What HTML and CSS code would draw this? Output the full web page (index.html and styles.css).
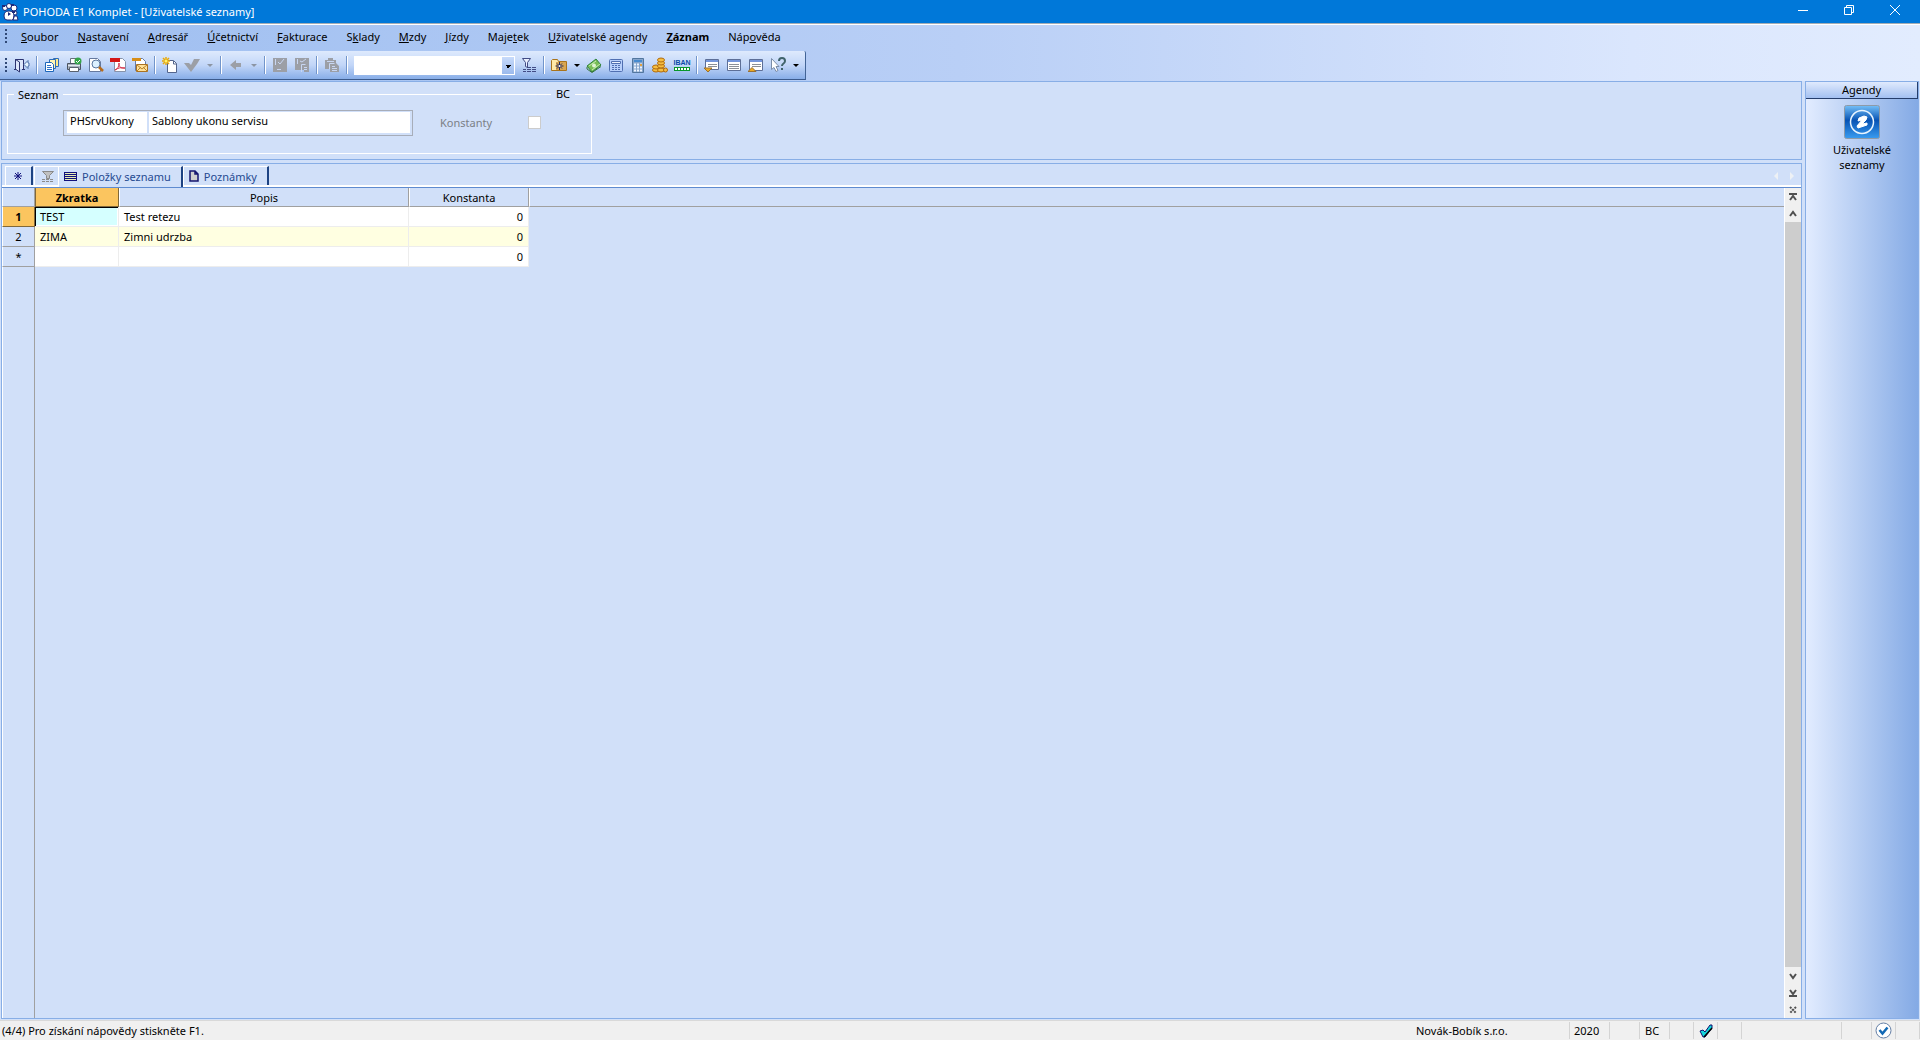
FILE: index.html
```html
<!DOCTYPE html>
<html lang="cs">
<head>
  <meta charset="UTF-8" />
  <meta name="viewport" content="width=device-width, initial-scale=1.0" />
  <title>POHODA E1 Komplet - [Uživatelské seznamy]</title>
  <link rel="stylesheet" href="styles.css">
</head>
<body>
  <header class="titlebar">
    <svg class="logo" width="18" height="18" viewBox="0 0 18 18">
      <g fill="#fff" stroke="#1c2a7c"><circle cx="4" cy="5" r="2.5"/><circle cx="8" cy="3" r="2.5"/><circle cx="13" cy="5" r="3"/><circle cx="14" cy="10" r="2"/><path d="M3 13q0-5 5-5t5 5-4 4H6q-3 0-3-4zM13 13h3l1 4h-5z"/></g>
      <path d="M1 2h3v2H1zM7 9l3 2-3 2zM10 1h3v2h-3zM11 8h3v2h-3z" fill="#1c2a7c"/>
    </svg>
    <h1>POHODA E1 Komplet - [Uživatelské seznamy]</h1>
    <div class="window-buttons">
      <button aria-label="Minimalizovat"><svg width="12" height="12"><path d="M1 6.500h10"/></svg></button>
      <button aria-label="Obnovit"><svg width="12" height="12"><path d="M1.500 3.500h7v7h-7zM3.500 3V1.500h7v7H9"/></svg></button>
      <button aria-label="Zavřít"><svg width="12" height="12"><path d="M1 1l10 10M11 1L1 11"/></svg></button>
    </div>
  </header>

  <div class="bars">
    <nav class="menu">
      <span class="grip"></span>
      <button><u>S</u>oubor</button>
      <button><u>N</u>astavení</button>
      <button><u>A</u>dresář</button>
      <button><u>Ú</u>četnictví</button>
      <button><u>F</u>akturace</button>
      <button>S<u>k</u>lady</button>
      <button><u>M</u>zdy</button>
      <button><u>J</u>ízdy</button>
      <button>Maje<u>t</u>ek</button>
      <button><u>U</u>živatelské agendy</button>
      <button class="strong"><u>Z</u>áznam</button>
      <button>Náp<u>o</u>věda</button>
    </nav>

    <div class="toolbar">
      <span class="grip"></span>
      <button class="tool" aria-label="Konec"><svg viewBox="0 0 16 16"><path d="M1.500 12V2.500h8V12M1.500 2.500l4 2.500v10l-4-3zM0 12.500h2M8 12.500h3" fill="#dce6fa" stroke="#2b3370"/><path d="M10 7.500l4-4v2.500h1v3h-1v2.500z" fill="#e6f4ff" stroke="#4c70a8"/></svg></button>
      <span class="sep"></span>
      <button class="tool" aria-label="Agendy"><svg viewBox="0 0 16 16"><path d="M9.500 1.500h5v8h-5z" fill="#ffe98a" stroke="#2d6cb8"/><path d="M5.500 2.500h6v9h-6z" fill="#fff6b5" stroke="#2d6cb8"/><path d="M1.500 5.500h6l2 2v7h-8z" fill="#fff" stroke="#1d66ba"/><path d="M3 8.500h4M3 10.500h5M3 12.500h5" stroke="#2d72c8"/></svg></button>
      <button class="tool" aria-label="Tisk"><svg viewBox="0 0 16 16"><path d="M4.500 6V1.500h6l1 1V6" fill="#fff" stroke="#69707d"/><path d="M1.500 6.500h13v6h-13z" fill="#aab3c0" stroke="#4b5360"/><path d="M3.500 10.500h9v4h-9z" fill="#fff" stroke="#59616e"/><path d="M2 8.500h12" stroke="#e4e9ef"/><circle cx="12" cy="4" r="3.500" fill="#35a549"/><path d="M10 4l1.500 1.500L14 3" fill="none" stroke="#fff"/></svg></button>
      <button class="tool" aria-label="Náhled"><svg viewBox="0 0 16 16"><path d="M1.500 1.500h8l3 3v10h-11z" fill="#fff" stroke="#66799e"/><circle cx="8" cy="7" r="4" fill="#dcf1ff" stroke="#59779f"/><path d="M11 10l4 4" stroke="#b66b1c" stroke-width="2.500"/></svg></button>
      <button class="tool" aria-label="PDF"><svg viewBox="0 0 16 16"><path d="M4.500 1.500h8l3 3v10h-11z" fill="#fff" stroke="#8793aa"/><path d="M0 1h10v4H0z" fill="#d41717"/><path d="M5 13c3-1 4-4 4-7 0 4 2 6 6 5-4-1-7 0-10 2z" fill="none" stroke="#d5324a"/></svg></button>
      <button class="tool" aria-label="E-mail"><svg viewBox="0 0 16 16"><path d="M3.500 1.500h7l3 3v9h-10z" fill="#fff" stroke="#657ba6"/><path d="M0 1h9v3H0z" fill="#d78e18"/><path d="M4.500 7.500h11v7h-11z" fill="#ffe19a" stroke="#aa7221"/><path d="M5 8l5 4 5-4M5 14l4-4M15 14l-4-4" fill="none" stroke="#b9852b"/></svg></button>
      <span class="sep"></span>
      <button class="tool" aria-label="Nový"><svg viewBox="0 0 16 16"><path d="M5.500 3.500h6l3 3v9h-9z" fill="#fff" stroke="#53658d"/><path d="M11.500 4v3h3" fill="none" stroke="#53658d"/><path d="M4 0v8M0 4h8M1 1l6 6M7 1L1 7" stroke="#e8a90b" stroke-width="1.500"/><circle cx="4" cy="4" r="1.500" fill="#fff36b"/></svg></button>
      <button class="tool" aria-label="Uložit" disabled><svg viewBox="0 0 16 16"><path d="M0 6h5l2 2 3-6h6l-3 5-6 8z" fill="#9c9fa6"/></svg></button>
      <button class="drop grey" aria-label="Možnosti"></button>
      <span class="sep"></span>
      <button class="tool" aria-label="Zpět" disabled><svg viewBox="0 0 16 16"><path d="M2 8l6-5v3h5v4H8v3z" fill="#9c9fa6"/></svg></button>
      <button class="drop grey" aria-label="Historie"></button>
      <span class="sep"></span>
      <button class="tool" aria-label="Uložit záznam" disabled><svg viewBox="0 0 16 16"><path d="M1 1h14v14H1z" fill="#9c9fa6"/><path d="M3.500 2v6M6 5l2 2 4-5M5 12.500h4" stroke="#c8d6f2" fill="none"/></svg></button>
      <button class="tool" aria-label="Uložit kopii" disabled><svg viewBox="0 0 16 16"><path d="M1 1h14v14h-5v-2H1z" fill="#9c9fa6"/><path d="M3.500 2v5M6 4l2 1 4-3M7.500 15V7.500h4M10 10.500h3M10 12.500h3" stroke="#c8d6f2" fill="none"/></svg></button>
      <span class="sep"></span>
      <button class="tool" aria-label="Kopírovat" disabled><svg viewBox="0 0 16 16"><path d="M1 3h3V1h5v2h3v3l3 3v6H6v-3H1z" fill="#9c9fa6"/><path d="M3 4.500h7M5.500 12V6.500h5M8 9.500h3M8 11.500h5M8 13.500h5" stroke="#c8d6f2" fill="none"/></svg></button>
      <span class="sep"></span>
      <select class="search" aria-label="Hledat"><option></option></select>
      <button class="tool" aria-label="Výběr"><svg viewBox="0 0 16 16"><path d="M1.500 1.500h8l-3 4v5l-2-1v-4z" fill="#e9efff" stroke="#424c85"/><path d="M2 12.500h3M2 14.500h3M6 10.500h4M6 12.500h4M6 14.500h4M11 10.500h4M11 12.500h4M11 14.500h4" stroke="#424c85"/></svg></button>
      <span class="sep"></span>
      <button class="tool" aria-label="Oblíbené"><svg viewBox="0 0 16 16"><path d="M.5 13.500v-10l1-1h5l1 2h8v9z" fill="#ffe9a8" stroke="#a9741c"/><path d="M5 5h10v8H5z" fill="#d9a650"/><path d="M8.500 5v8M4.500 9h8M6 6.500l5 5M11 6.500l-5 5" stroke="#1d2862"/><circle cx="8.500" cy="9" r="1" fill="#fff"/></svg></button>
      <button class="drop" aria-label="Další"></button>
      <button class="tool" aria-label="Pokladna"><svg viewBox="0 0 16 16"><path d="M1 9l9-7 5 6-9 7z" fill="#79bd56" stroke="#30843c"/><path d="M3 9l7-5M6 13l8-6" stroke="#c5ecb0"/><circle cx="8" cy="8.500" r="2" fill="#dff3d3"/><path d="M1 10v2l5 3.500 9-6" fill="none" stroke="#39763a"/></svg></button>
      <button class="tool" aria-label="Kalkulačka"><svg viewBox="0 0 16 16"><rect x="1.500" y="2.500" width="13" height="12" rx="1" fill="#b8d0fb" stroke="#506fb1"/><path d="M3.500 4.500h9v2h-9z" fill="#edf4ff" stroke="#506fb1"/><path d="M4 8.500h9M4 10.500h9M4 12.500h9" stroke="#506fb1" stroke-dasharray="2 1"/></svg></button>
      <button class="tool" aria-label="Výpočet"><svg viewBox="0 0 16 16"><path d="M2.500 1.500h11v14h-11z" fill="#86a5cc" stroke="#53779e"/><path d="M4 3h8v2H4z" fill="#468bd0"/><path d="M4 7.500h8M4 10.500h8M4 13.500h8" stroke="#edf5ff" stroke-width="2" stroke-dasharray="2 1"/><path d="M10 7h2v2h-2z" fill="#e4a13c"/></svg></button>
      <button class="tool" aria-label="Kurzy"><svg viewBox="0 0 16 16"><g fill="#f5be42" stroke="#b06a0c"><ellipse cx="4" cy="13" rx="3.500" ry="2"/><ellipse cx="4" cy="10" rx="3.500" ry="2"/><ellipse cx="9" cy="13" rx="3.500" ry="2"/><ellipse cx="9" cy="9" rx="3.500" ry="2"/><ellipse cx="9" cy="6" rx="3.500" ry="2"/><ellipse cx="9" cy="3" rx="3.500" ry="2"/><circle cx="13.500" cy="13" r="2"/></g></svg></button>
      <button class="tool iban" aria-label="Kontrola IBAN"><span>IBAN</span><svg viewBox="0 0 16 4"><path d="M0 0h16v4H0z" fill="#08972b"/><path d="M1 2h14" stroke="#fff" stroke-width="2" stroke-dasharray="2 1"/></svg></button>
      <span class="sep"></span>
      <button class="tool" aria-label="Dolní panel"><svg viewBox="0 0 16 16"><path d="M1.500 2.500h13v10h-13z" fill="#fff" stroke="#5d6f97"/><path d="M2 3h12v2H2z" fill="#7395dc"/><path d="M4 7.500h9M4 9.500h9" stroke="#8b9098"/><path d="M0 11h8l-4 4z" fill="#eba924" stroke="#9b7130"/></svg></button>
      <button class="tool" aria-label="Panel"><svg viewBox="0 0 16 16"><path d="M1.500 2.500h13v11h-13z" fill="#fff" stroke="#5d6f97"/><path d="M2 3h12v2H2z" fill="#7395dc"/><path d="M3 7.500h10M3 9.500h10M3 11.500h10" stroke="#8b9098"/></svg></button>
      <button class="tool" aria-label="Horní panel"><svg viewBox="0 0 16 16"><path d="M1.500 2.500h13v11h-13z" fill="#fff" stroke="#5d6f97"/><path d="M2 3h12v2H2z" fill="#7395dc"/><path d="M4 7.500h9M4 9.500h9" stroke="#8b9098"/><path d="M0 14.500h8l-4-4z" fill="#eba924" stroke="#9b7130"/></svg></button>
      <button class="tool" aria-label="Nápověda"><svg viewBox="0 0 16 16"><path d="M1.500 1.500v11l2.500-2 2 4 2-1-2-4h3z" fill="#fff" stroke="#7b8da8"/><path d="M9 4c0-4 6-4 6 0 0 3-3 2-3 5M12 11v2" fill="none" stroke="#40636b" stroke-width="2"/></svg></button>
      <button class="drop" aria-label="Další nápověda"></button>
    </div>
  </div>

  <div class="workspace">
    <main class="content">
      <section class="form-panel">
        <fieldset class="group">
          <legend>Seznam</legend>
          <span class="group-right">BC</span>
          <div class="fields">
            <div class="name-box">
              <input class="code" type="text" value="PHSrvUkony" aria-label="Zkratka seznamu">
              <input class="name" type="text" value="Sablony ukonu servisu" aria-label="Název seznamu">
            </div>
            <label for="konstanty">Konstanty</label>
            <input class="check" type="checkbox" id="konstanty" disabled>
          </div>
        </fieldset>
      </section>

      <section class="list-panel">
        <div class="tabs">
          <button class="tab small" aria-label="Nový záznam"><svg width="8" height="8" viewBox="0 0 8 8"><path d="M4 0v8M0 4h8M1 1l6 6M7 1L1 7" stroke="#10107c"/></svg></button>
          <button class="tab filter" aria-label="Filtr"><svg width="12" height="12" viewBox="0 0 12 12"><path d="M.5 1.500h11l-4 4v3h-3v-3z" fill="#c0c0c0" stroke="#898989"/><path d="M0 9.500h12M0 11.500h12" stroke="#8b8b8b" stroke-dasharray="3 1"/></svg></button>
          <button class="tab active"><svg width="13" height="9" viewBox="0 0 13 9"><path d="M0 0h13v9H0z" fill="#11117d"/><path d="M1 1.500h11M1 3.500h11M1 5.500h11M1 7.500h11" stroke="#e6ecb4"/></svg>Položky seznamu</button>
          <button class="tab"><svg width="10" height="12" viewBox="0 0 10 12"><path d="M1 1h5l3 3v7H1zM6 1v3h3" fill="#cfcfcf" stroke="#15156f" stroke-width="1.500"/></svg>Poznámky</button>
          <span class="tab-scroll"><svg width="20" height="8"><path d="M4 0v8L0 4zM16 0v8l4-4z" fill="#eef1f5"/></svg></span>
        </div>

        <div class="grid-area">
          <table class="grid">
            <colgroup><col class="col-num"><col class="col-code"><col class="col-name"><col class="col-const"><col></colgroup>
            <thead>
              <tr><th></th><th class="current">Zkratka</th><th>Popis</th><th>Konstanta</th><th class="rest"></th></tr>
            </thead>
            <tbody>
              <tr><th class="current">1</th><td class="focus">TEST</td><td>Test retezu</td><td class="number">0</td></tr>
              <tr class="odd"><th>2</th><td>ZIMA</td><td>Zimni udrzba</td><td class="number">0</td></tr>
              <tr><th>*</th><td></td><td></td><td class="number">0</td></tr>
              <tr class="blank"><th></th></tr>
            </tbody>
          </table>
          <div class="scrollbar">
            <button aria-label="Na začátek"><svg width="8" height="8"><path d="M0 1h8M1 7l3-4 3 4"/></svg></button>
            <button aria-label="Nahoru"><svg width="8" height="8"><path d="M1 6l3-4 3 4"/></svg></button>
            <div class="thumb"></div>
            <button aria-label="Dolů"><svg width="8" height="8"><path d="M1 2l3 4 3-4"/></svg></button>
            <button aria-label="Na konec"><svg width="8" height="8"><path d="M1 1l3 4 3-4M0 7h8"/></svg></button>
            <button aria-label="Nový řádek"><svg width="8" height="8"><path d="M1 1l6 6M7 1L1 7" stroke-dasharray="2 1"/></svg></button>
          </div>
        </div>
      </section>
    </main>

    <aside class="agendas">
      <h2>Agendy</h2>
      <a class="agenda" href="#">
        <svg width="36" height="34" viewBox="0 0 36 34">
          <defs><linearGradient id="tile" x2="0" y2="1"><stop stop-color="#75c0f8"/><stop offset=".45" stop-color="#0753b4"/><stop offset="1" stop-color="#3a9cf0"/></linearGradient></defs>
          <rect x=".5" y=".5" width="35" height="33" rx="2" fill="url(#tile)" stroke="#8e9aa8"/>
          <circle cx="18" cy="17" r="11.500" fill="none" stroke="#e9f5ff" stroke-width="1.500"/>
          <path d="M15 13l5-2 3 1-1 3-4 4 5-1v2l-9 3-1-2 5-6-4 1z" fill="#fff" stroke="#fff"/>
        </svg>
        Uživatelské seznamy
      </a>
    </aside>
  </div>

  <footer class="status">
    <span class="hint">(4/4) Pro získání nápovědy stiskněte F1.</span>
    <span class="cell company">Novák-Bobík s.r.o.</span>
    <span class="cell year">2020</span>
    <span class="cell w30"></span>
    <span class="cell w30 user">BC</span>
    <span class="cell w24"></span>
    <span class="cell w24"><svg width="14" height="14" viewBox="0 0 14 14"><path d="M1 7l3-1 2 2 5-7h2v3l-7 9H4z" fill="#15d6dc" stroke="#101070"/><path d="M5 13l8-9" stroke="#000" stroke-width="1.500"/></svg></span>
    <span class="cell w24"></span>
    <span class="cell w100"></span>
    <span class="cell w30"></span>
    <span class="cell w24"><svg width="17" height="17" viewBox="0 0 17 17"><circle cx="8.500" cy="8.500" r="7.500" fill="#fff" stroke="#637ea5"/><path d="M4.500 8l3 3.500 5-6" fill="none" stroke="#1269b5" stroke-width="2.500"/></svg></span>
    <span class="cell w24"></span>
  </footer>
</body>
</html>
```
FILE: styles.css
```css
* {
  box-sizing: border-box;
}

body {
  margin: 0;
  height: 100vh;
  display: flex;
  flex-direction: column;
  overflow: hidden;
  font-family: "Noto Sans", "Open Sans", sans-serif;
  font-size: 11px;
  line-height: 15px;
  color: #000;
  background: #d1e0f9;
}

button,
input,
select {
  font: inherit;
  color: inherit;
  margin: 0;
  padding: 0;
  border: 0;
  border-radius: 0;
  background: none;
}

h1,
h2 {
  margin: 0;
  font-size: inherit;
  font-weight: normal;
}

/* title bar */
.titlebar {
  flex: none;
  height: 24px;
  display: flex;
  align-items: center;
  gap: 4px;
  padding: 0 2px 0 1px;
  color: #fff;
  background: #0078d9;
  border-bottom: 1px solid #a3acb5;
}

.window-buttons {
  margin-left: auto;
  align-self: flex-start;
  display: flex;
  height: 20px;
}

.window-buttons button {
  width: 46px;
  display: flex;
  align-items: center;
  justify-content: center;
}

.window-buttons svg {
  fill: none;
  stroke: #fff;
}

/* menu and toolbar */
.bars {
  flex: none;
  padding-bottom: 1px;
  border-top: 1px solid #fff;
  background: linear-gradient(90deg, #9ebef0, #b9cff6 50%, #dae6fd 85%, #e2ecfe);
}

.menu {
  display: flex;
  align-items: center;
  gap: 1px;
  height: 26px;
  padding: 0 5px 3px;
}

.menu button {
  padding: 0 9px;
}

.menu .strong {
  font-weight: bold;
}

.grip {
  width: 6px;
  height: 15px;
  background: repeating-linear-gradient(#2f4876 0 2px, transparent 2px 4px) left / 2px 100% no-repeat;
}

.toolbar {
  display: flex;
  align-items: center;
  width: max-content;
  height: 29px;
  padding: 0 3px 0 5px;
  border-right: 1px solid #426496;
  border-bottom: 1px solid #3b5a8c;
  border-radius: 0 2px 0 0;
  background: linear-gradient(#deeafd, #c2d6f8 50%, #88aee8);
}

.tool {
  width: 22px;
  height: 22px;
  display: flex;
  align-items: center;
  justify-content: center;
}

.tool svg {
  width: 16px;
  height: 16px;
}

.iban {
  flex-direction: column;
  font-family: "Liberation Sans", sans-serif;
  font-size: 7px;
  line-height: 8px;
  font-weight: bold;
  color: #0a4ca8;
}

.iban svg {
  height: 4px;
}

.sep {
  width: 8px;
  height: 18px;
  background: linear-gradient(90deg, #7295cb 50%, #fff 50%) center / 2px 100% no-repeat;
}

.drop {
  width: 13px;
  height: 22px;
  display: flex;
  align-items: center;
  justify-content: center;
}

.drop::before {
  content: "";
  border: 3px solid transparent;
  border-top-color: #000;
  border-bottom: 0;
}

.drop.grey {
  width: 14px;
}

.drop.grey::before {
  border-top-color: #8c95a3;
}

.search {
  width: 161px;
  height: 19px;
  margin: 0 3px;
  appearance: none;
  border: 1px solid #fff;
  background: linear-gradient(45deg, transparent 50%, #000 50%) right 6px top 8px / 3px 3px no-repeat,
    linear-gradient(-45deg, transparent 50%, #000 50%) right 3px top 8px / 3px 3px no-repeat,
    linear-gradient(#c8dbfb, #9bbaec) right / 12px 100% no-repeat, #fff;
}

/* main area */
.workspace {
  flex: 1;
  min-height: 0;
  display: flex;
  gap: 3px;
  padding: 0 1px;
}

.content {
  flex: 1;
  min-width: 0;
  display: flex;
  flex-direction: column;
  gap: 3px;
}

.form-panel {
  padding: 5px;
  border: 1px solid #88aee6;
}

.group {
  width: 585px;
  height: 67px;
  margin: 0;
  padding: 0;
  border: 1px solid #fff;
  position: relative;
}

.group legend {
  margin-left: 6px;
  padding: 0 4px;
}

.group-right {
  position: absolute;
  top: -16px;
  right: 16px;
  padding: 0 5px;
  background: #d1e0f9;
}

.fields {
  display: flex;
  align-items: center;
  padding: 8px 0 0 55px;
}

.name-box {
  display: flex;
  gap: 2px;
  width: 350px;
  height: 26px;
  padding: 1px 2px 2px 3px;
  border: 1px solid #a7adb9;
  margin-right: 27px;
}

.name-box input {
  height: 21px;
  padding: 0 3px 5px;
  background: #fff;
}

.code {
  width: 80px;
}

.name {
  flex: 1;
  min-width: 0;
}

.fields label {
  width: 88px;
  padding-bottom: 2px;
  color: #7b7f86;
}

.check {
  appearance: none;
  width: 13px;
  height: 13px;
  margin-bottom: 2px;
  border: 1px solid #ccc;
  background: #fff;
}

.list-panel {
  flex: 1;
  min-height: 0;
  display: flex;
  flex-direction: column;
  border: 1px solid #88aee6;
}

.tabs {
  flex: none;
  display: flex;
  align-items: flex-end;
  height: 24px;
  padding-left: 3px;
  border-bottom: 1px solid #5e8bd0;
  box-shadow: inset 0 -2px #fff;
}

.tab {
  display: flex;
  align-items: center;
  gap: 5px;
  height: 19px;
  padding: 0 10px 0 5px;
  margin-bottom: 2px;
  color: #254a91;
  border-top: 1px solid #fff;
  border-left: 1px solid #fff;
  border-right: 2px solid #1d4383;
}

.tab.small {
  width: 28px;
  padding: 0 2px 0 0;
  justify-content: center;
}

.tab.filter {
  width: 24px;
  padding: 0 0 0 2px;
  margin-left: 1px;
  justify-content: center;
  border-right: 0;
}

.tab.active {
  height: 21px;
  margin-bottom: 0;
  padding-bottom: 1px;
  background: #d1e0f9;
}

.tab-scroll {
  align-self: center;
  margin-left: auto;
  margin-right: 7px;
}

.grid-area {
  flex: 1;
  min-height: 0;
  display: flex;
}

.grid {
  flex: 1;
  height: 100%;
  table-layout: fixed;
  border-collapse: separate;
  border-spacing: 0;
}

.col-num { width: 33px; }
.col-code { width: 84px; }
.col-name { width: 290px; }
.col-const { width: 120px; }

.grid th,
.grid td {
  height: 20px;
  padding: 0 5px;
  line-height: 15px;
}

.grid th {
  font-weight: normal;
  border-right: 1px solid #a0a0a0;
  border-bottom: 1px solid #a0a0a0;
  border-left: 1px solid #fff;
}

.grid thead th {
  height: 19px;
}

.grid .rest {
  border-right: 0;
}

.grid .current {
  font-weight: bold;
  background: #fbc55f;
  border-color: #80683a;
}

.grid tbody .current {
  border-left-color: #fff;
}

.grid td {
  background: #fff;
  border-right: 1px solid #ededed;
  border-bottom: 1px solid #ededed;
}

.grid .odd td {
  background: #ffffe1;
}

.grid .focus {
  background: #d5ffff;
  box-shadow: inset 1px 1px #000, inset -1px -1px #fff;
}

.grid .number {
  text-align: right;
}

.grid .blank th {
  height: auto;
  border-bottom: 0;
}

.scrollbar {
  width: 17px;
  display: flex;
  flex-direction: column;
  border-left: 1px solid #fff;
  background: #f0f0f0;
}

.scrollbar button {
  height: 17px;
  display: flex;
  align-items: center;
  justify-content: center;
}

.scrollbar svg {
  fill: none;
  stroke: #505050;
  stroke-width: 2;
}

.thumb {
  flex: 1;
  background: #cdcdcd;
}

/* right column */
.agendas {
  width: 114px;
  border: 1px solid #88aee6;
  background: linear-gradient(90deg, #e2ecff, #84aae5);
}

.agendas h2 {
  height: 17px;
  text-align: center;
  border-right: 1px solid #253d6b;
  border-bottom: 1px solid #253d6b;
  background: linear-gradient(#e0eafd, #a3c0f1);
}

.agenda {
  display: flex;
  flex-direction: column;
  align-items: center;
  gap: 3px;
  width: 70px;
  margin: 6px auto 0;
  text-align: center;
  color: #000;
  text-decoration: none;
}

/* status bar */
.status {
  flex: none;
  display: flex;
  align-items: center;
  height: 20px;
  margin-top: 1px;
  background: #f0f0f0;
  border-top: 1px solid #d9d9d9;
}

.hint {
  flex: 1;
  padding-left: 2px;
}

.cell {
  display: flex;
  align-items: center;
  justify-content: center;
  height: 17px;
  border-right: 1px solid #d4d4d4;
}

.company {
  width: 154px;
  justify-content: flex-start;
}

.user {
  justify-content: flex-start;
  padding-left: 5px;
}

.year {
  width: 40px;
  justify-content: flex-start;
  padding-left: 4px;
}

.w24 { width: 24px; }
.w30 { width: 30px; }
.w100 { width: 100px; }
```
